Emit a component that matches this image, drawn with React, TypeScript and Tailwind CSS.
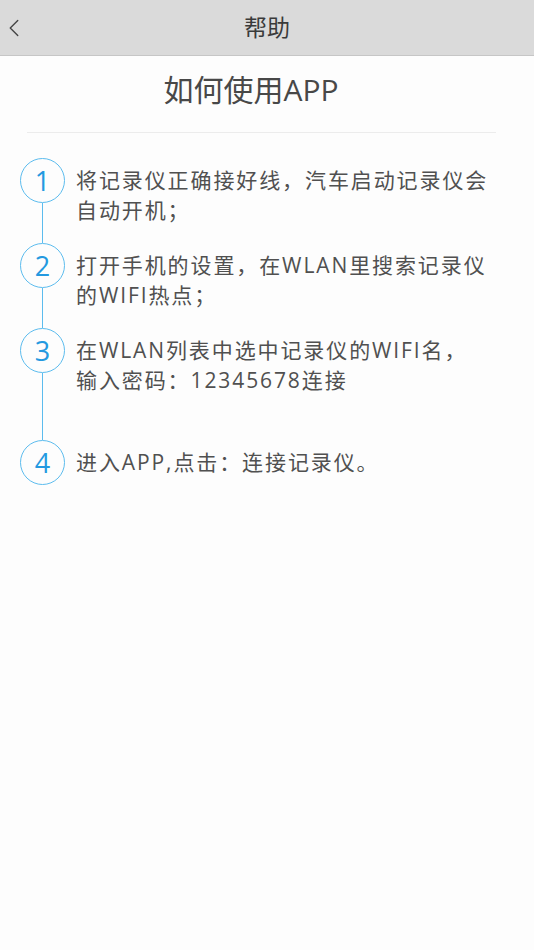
import { ChevronLeft } from "lucide-react";

const steps = [
  { n: 1, lines: ["将记录仪正确接好线，汽车启动记录仪会", "自动开机；"], gap: "pb-[18px]" },
  { n: 2, lines: ["打开手机的设置，在WLAN里搜索记录仪", "的WIFI热点；"], gap: "pb-[18px]" },
  { n: 3, lines: ["在WLAN列表中选中记录仪的WIFI名，", "输入密码：12345678连接"], gap: "pb-[45px]" },
  { n: 4, lines: ["进入APP,点击：连接记录仪。"], gap: "" },
];

export default function App() {
  return (
    <div
      className="flex flex-col w-[534px] h-[950px] bg-[#fdfdfd] text-[#4a4a4a]"
      style={{ fontFamily: '"Open Sans", "Noto Sans CJK SC", sans-serif' }}
    >
      {/* Header */}
      <div className="relative h-[56px] bg-[#dadada] border-b border-[#c6c6c6] flex items-center justify-center">
        <button className="absolute left-[-1px] top-[13px] w-[30px] h-[30px] flex items-center justify-center text-[#444]">
          <ChevronLeft size={30} strokeWidth={1.1} />
        </button>
        <h1 className="text-[23px] text-[#3a3a3a]">帮助</h1>
      </div>

      {/* Title */}
      <div className="pt-[14px] pb-[22px] pr-[32px] text-center text-[30px] leading-[40px] text-[#484848]">
        如何使用APP
      </div>
      <div className="ml-[27px] mr-[38px] h-px bg-[#ececec]" />

      {/* Steps */}
      <div className="pt-[25px] pl-[20px]">
        {steps.map((s, i) => (
          <div key={s.n} className="flex">
            <div className="flex flex-col items-center w-[45px] shrink-0">
              <div className="w-[45px] h-[45px] rounded-full border-[1.5px] border-[#5cbcee] flex items-center justify-center text-[#2499e0] text-[27px] leading-none">
                {s.n}
              </div>
              {i < steps.length - 1 && <div className="flex-1 w-[1.5px] bg-[#5cbcee]" />}
            </div>
            <div className={`pl-[11px] pt-[7px] ${s.gap} text-[21px] leading-[30px] tracking-[1.9px] text-[#505050]`}>
              {s.lines.map((l) => (
                <div key={l}>{l}</div>
              ))}
            </div>
          </div>
        ))}
      </div>
    </div>
  );
}
